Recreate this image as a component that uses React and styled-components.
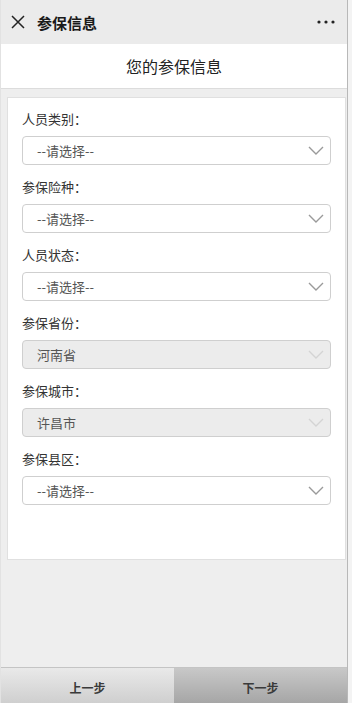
import React from "react";
import styled, { createGlobalStyle } from "styled-components";

const GlobalStyle = createGlobalStyle`
  html, body {
    margin: 0;
    padding: 0;
    background: #f2f2f2;
  }
  * {
    box-sizing: border-box;
  }
`;

const Frame = styled.div`
  display: flex;
  width: 352px;
  height: 703px;
  overflow: hidden;
  font-family: "Noto Sans CJK SC", "Noto Sans", sans-serif;
`;

const Screen = styled.div`
  flex: 1;
  display: flex;
  flex-direction: column;
  background: #eeeeee;
  border-left: 1px solid #e2e2e2;
`;

const EdgeStrip = styled.div`
  width: 5px;
  background: #f3f3f3;
  border-left: 1px solid #b8b8b8;
`;

const TopBar = styled.div`
  height: 44px;
  display: flex;
  align-items: center;
  padding: 0 12px 0 9px;
  background: #ebebeb;
`;

const BarTitle = styled.div`
  flex: 1;
  margin-left: 11px;
  font-size: 15px;
  font-weight: 700;
  color: #1a1a1a;
`;

const Header = styled.div`
  height: 45px;
  display: flex;
  align-items: center;
  justify-content: center;
  background: #ffffff;
  border-bottom: 1px solid #dcdcdc;
  font-size: 16px;
  color: #222;
`;

const Main = styled.div`
  flex: 1;
  padding: 8px 1px 0 6px;
`;

const Card = styled.div`
  background: #ffffff;
  border: 1px solid #e0e0e0;
  padding: 12px 14px 41px 14px;
  display: flex;
  flex-direction: column;
`;

const Field = styled.div`
  display: flex;
  flex-direction: column;
`;

const Label = styled.div`
  font-size: 13px;
  color: #333;
  line-height: 18px;
  margin-bottom: 8px;
`;

const Select = styled.div`
  height: 29px;
  display: flex;
  align-items: center;
  justify-content: space-between;
  padding: 0 4px 0 14px;
  margin-bottom: 13px;
  border: 1px solid #cfcfcf;
  border-radius: 4px;
  background: ${({ disabled }) => (disabled ? "#ececec" : "#ffffff")};
  font-size: 13px;
  color: #555;
`;

const Footer = styled.div`
  height: 36px;
  display: flex;
  border-top: 1px solid #c4c4c4;
`;

const StepButton = styled.div`
  flex: 1;
  display: flex;
  justify-content: center;
  padding-top: 11px;
  font-size: 12px;
  font-weight: 700;
  color: #3a3a3a;
  background: ${({ primary }) =>
    primary
      ? "linear-gradient(#c8c8c8, #a6a6a6)"
      : "linear-gradient(#e9e9e9, #cfcfcf)"};
`;

const CloseIcon = () => (
  <svg width="16" height="16" viewBox="0 0 16 16">
    <path d="M2 2 L14 14 M14 2 L2 14" stroke="#222" strokeWidth="1.5" fill="none" />
  </svg>
);

const MoreIcon = () => (
  <svg width="18" height="4" viewBox="0 0 18 4">
    <circle cx="2" cy="2" r="1.6" fill="#222" />
    <circle cx="9" cy="2" r="1.6" fill="#222" />
    <circle cx="16" cy="2" r="1.6" fill="#222" />
  </svg>
);

const Chevron = ({ faded }) => (
  <svg width="20" height="12" viewBox="0 0 20 12">
    <path
      d="M3 2 L10 9 L17 2"
      stroke={faded ? "#d4d4d4" : "#9a9a9a"}
      strokeWidth="1.4"
      fill="none"
    />
  </svg>
);

const fields = [
  { label: "人员类别：", value: "--请选择--" },
  { label: "参保险种：", value: "--请选择--" },
  { label: "人员状态：", value: "--请选择--" },
  { label: "参保省份：", value: "河南省", disabled: true },
  { label: "参保城市：", value: "许昌市", disabled: true },
  { label: "参保县区：", value: "--请选择--" },
];

const App = () => (
  <>
    <GlobalStyle />
    <Frame>
      <Screen>
        <TopBar>
          <CloseIcon />
          <BarTitle>参保信息</BarTitle>
          <MoreIcon />
        </TopBar>
        <Header>您的参保信息</Header>
        <Main>
          <Card>
            {fields.map((f) => (
              <Field key={f.label}>
                <Label>{f.label}</Label>
                <Select disabled={f.disabled}>
                  <span>{f.value}</span>
                  <Chevron faded={f.disabled} />
                </Select>
              </Field>
            ))}
          </Card>
        </Main>
        <Footer>
          <StepButton>上一步</StepButton>
          <StepButton primary>下一步</StepButton>
        </Footer>
      </Screen>
      <EdgeStrip />
    </Frame>
  </>
);

export default App;
